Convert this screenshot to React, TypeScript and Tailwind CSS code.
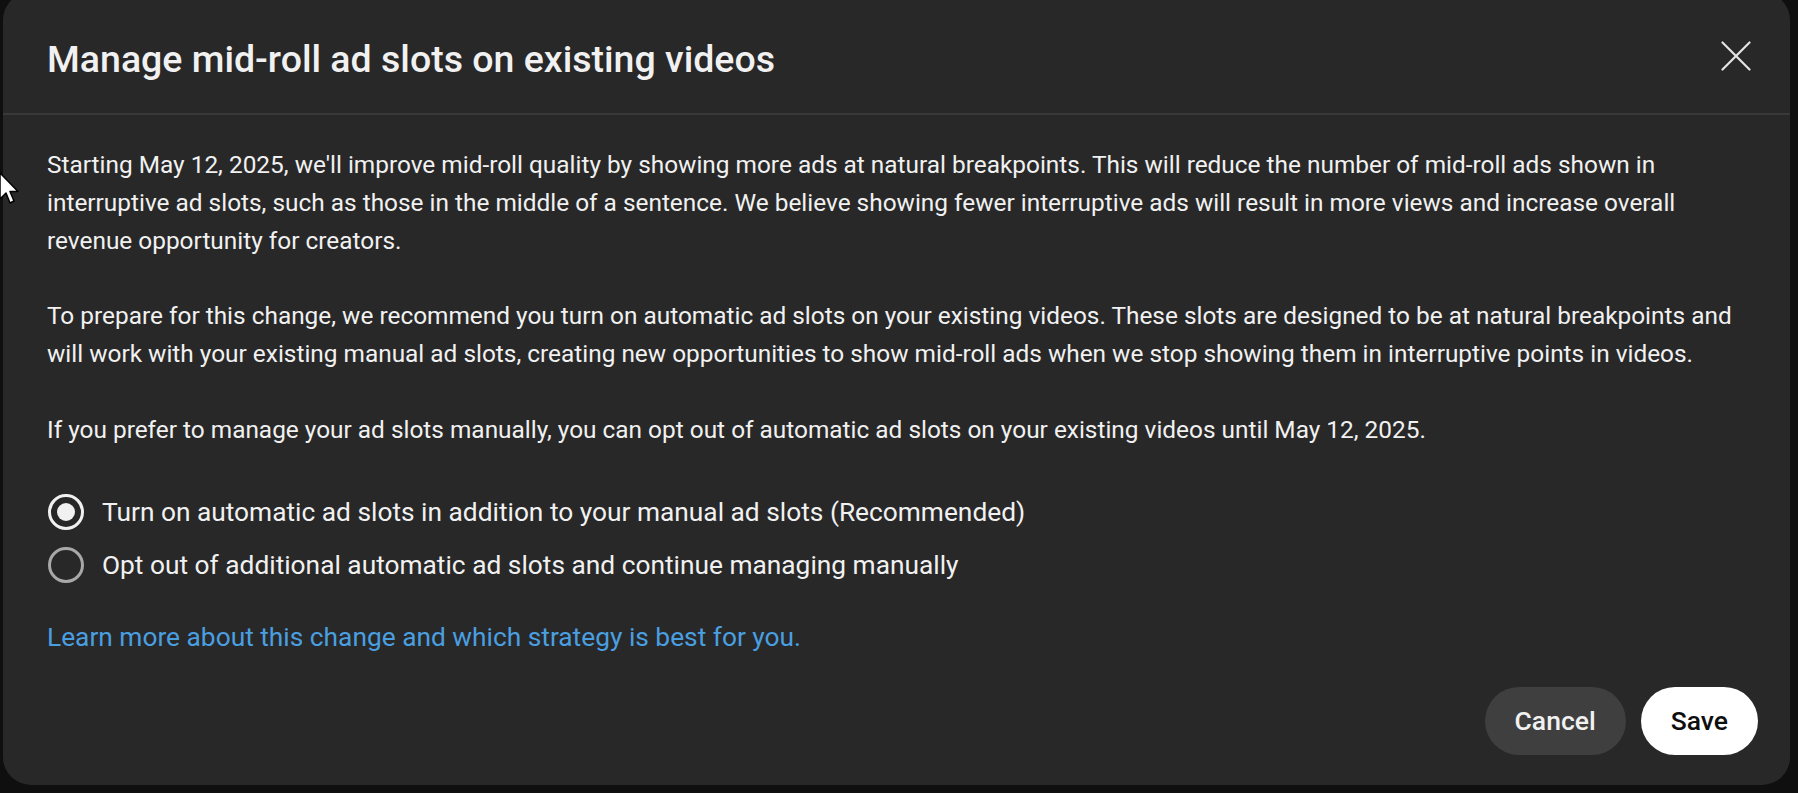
import { useState } from "react"

const font = { fontFamily: "Roboto, 'Noto Sans', Arial, sans-serif" }

function Radio({ checked, label, onSelect }: { checked: boolean; label: string; onSelect: () => void }) {
  return (
    <button type="button" onClick={onSelect} className="flex h-[53px] items-center gap-[18px] text-left">
      <span
        className={
          checked
            ? "flex h-[36px] w-[36px] items-center justify-center rounded-full border-[3px] border-[#f1f1f1]"
            : "flex h-[36px] w-[36px] items-center justify-center rounded-full border-[3px] border-[#a8a8a8]"
        }
      >
        {checked && <span className="h-[18px] w-[18px] rounded-full bg-[#f1f1f1]" />}
      </span>
      <span className="whitespace-nowrap text-[26.3px] leading-[38px] text-[#f1f1f1]">{label}</span>
    </button>
  )
}

export default function App() {
  const [choice, setChoice] = useState<"auto" | "manual">("auto")

  return (
    <div style={font} className="relative h-[793px] w-full overflow-hidden bg-[#0f0f0f] pl-[3px] pr-[8px]">
      <div className="mt-[-8px] flex h-[793px] flex-col rounded-[28px] bg-[#282828]">
        {/* header */}
        <div className="flex h-[123px] items-center justify-between border-b-2 border-[#393939] pl-[44px] pr-[24px] pt-[12px]">
          <h1 className="text-[37.5px] font-medium leading-[48px] text-[#f1f1f1]">
            Manage mid-roll ad slots on existing videos
          </h1>
          <button type="button" className="mb-[6px] flex h-[60px] w-[60px] items-center justify-center">
            <svg width="30" height="30" viewBox="0 0 30 30" fill="none" stroke="#e6e6e6" strokeWidth="2.2" strokeLinecap="round">
              <line x1="1.5" y1="1.5" x2="28.5" y2="28.5" />
              <line x1="28.5" y1="1.5" x2="1.5" y2="28.5" />
            </svg>
          </button>
        </div>

        {/* body */}
        <div className="flex-1 pl-[44px] pr-[32px] pt-[31px] text-[24.4px] leading-[38px] text-[#f1f1f1]">
          <p className="whitespace-nowrap">
            Starting May 12, 2025, we'll improve mid-roll quality by showing more ads at natural breakpoints. This will reduce the number of mid-roll ads shown in
            <br />
            interruptive ad slots, such as those in the middle of a sentence. We believe showing fewer interruptive ads will result in more views and increase overall
            <br />
            revenue opportunity for creators.
          </p>
          <p className="mt-[37px] whitespace-nowrap">
            To prepare for this change, we recommend you turn on automatic ad slots on your existing videos. These slots are designed to be at natural breakpoints and
            <br />
            will work with your existing manual ad slots, creating new opportunities to show mid-roll ads when we stop showing them in interruptive points in videos.
          </p>
          <p className="mt-[38px] whitespace-nowrap">
            If you prefer to manage your ad slots manually, you can opt out of automatic ad slots on your existing videos until May 12, 2025.
          </p>

          <div className="mt-[36px] flex flex-col pl-[1px]">
            <Radio
              checked={choice === "auto"}
              onSelect={() => setChoice("auto")}
              label="Turn on automatic ad slots in addition to your manual ad slots (Recommended)"
            />
            <Radio
              checked={choice === "manual"}
              onSelect={() => setChoice("manual")}
              label="Opt out of additional automatic ad slots and continue managing manually"
            />
          </div>

          <a href="#" className="mt-[27px] block whitespace-nowrap text-[26.3px] leading-[38px] text-[#4a9fe0]">
            Learn more about this change and which strategy is best for you.
          </a>
        </div>

        {/* footer */}
        <div className="flex justify-end gap-[15px] pb-[30px] pr-[32px]">
          <button type="button" className="h-[68px] rounded-full bg-[#3f3f3f] px-[30px] text-[26.5px] font-medium text-[#f1f1f1]">
            Cancel
          </button>
          <button type="button" className="h-[68px] rounded-full bg-white px-[30px] text-[26.5px] font-medium text-[#0f0f0f]">
            Save
          </button>
        </div>
      </div>

      {/* mouse cursor */}
      <svg className="absolute left-[-1px] top-[172px]" width="22" height="34" viewBox="0 0 22 34">
        <path d="M1 1 L1 27 L7 21 L11 31 L15 29 L11 19.5 L19 19.5 Z" fill="#ffffff" stroke="#000000" strokeWidth="1.5" strokeLinejoin="round" />
      </svg>
    </div>
  )
}
